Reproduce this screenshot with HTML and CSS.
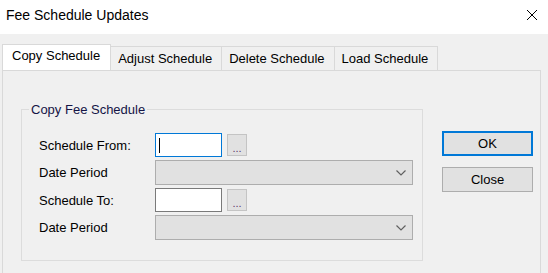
FILE: index.html
```html
<!DOCTYPE html>
<html lang="en">
<head>
  <meta charset="UTF-8">
  <title>Fee Schedule Updates</title>
  <link rel="stylesheet" href="styles.css">
</head>
<body>
<div class="titlebar">
  <span class="title">Fee Schedule Updates</span>
  <svg class="close-x" width="12" height="12" viewBox="0 0 12 12">
    <path d="M1 1 L11 11 M11 1 L1 11" stroke="#000" stroke-width="1" fill="none"/>
  </svg>
</div>

<div class="dialog">
  <div class="tabs">
    <div class="tab active">Copy Schedule</div>
    <div class="tab">Adjust Schedule</div>
    <div class="tab">Delete Schedule</div>
    <div class="tab">Load Schedule</div>
  </div>

  <div class="panel">
    <fieldset class="group">
      <legend>Copy Fee Schedule</legend>
      <div class="form-grid">
        <label>Schedule From:</label>
        <div class="field-row">
          <div class="text-box focused"><span class="caret"></span></div>
          <button class="dots-btn">...</button>
        </div>

        <label>Date Period</label>
        <div class="combo">
          <svg width="10" height="6" viewBox="0 0 10 6"><path d="M0.5 0.5 L5 5 L9.5 0.5" stroke="#606060" stroke-width="1.2" fill="none"/></svg>
        </div>

        <label>Schedule To:</label>
        <div class="field-row">
          <div class="text-box"></div>
          <button class="dots-btn">...</button>
        </div>

        <label>Date Period</label>
        <div class="combo">
          <svg width="10" height="6" viewBox="0 0 10 6"><path d="M0.5 0.5 L5 5 L9.5 0.5" stroke="#606060" stroke-width="1.2" fill="none"/></svg>
        </div>
      </div>
    </fieldset>

    <div class="actions">
      <button class="btn default">OK</button>
      <button class="btn">Close</button>
    </div>
  </div>
</div>
</body>
</html>
```

FILE: styles.css
```css
body {
  margin: 0;
  padding: 0;
  font-family: 'Liberation Sans', Arial, sans-serif;
  font-size: 13px;
  color: #000;
  background-color: #f0f0f0;
  height: 273px;
  overflow: hidden;
}

.titlebar {
  height: 34px;
  background-color: #ffffff;
  display: flex;
  justify-content: space-between;
  align-items: flex-start;
  padding: 0 10px 0 6px;
}

.title {
  font-size: 14px;
  line-height: 16px;
  padding-top: 7px;
}

.close-x {
  margin-top: 9px;
}

.dialog {
  padding: 10px 0 0 2px;
}

.tabs {
  display: flex;
  align-items: flex-end;
  height: 26px;
}

.tab {
  height: 24px;
  line-height: 24px;
  padding: 0 9px 0 7px;
  border: 1px solid #d9d9d9;
  border-bottom: none;
  border-left: none;
  box-sizing: border-box;
  background-color: #f0f0f0;
  white-space: nowrap;
}

.tab.active {
  height: 26px;
  line-height: 22px;
  padding: 0 10px 0 9px;
  border-left: 1px solid #d9d9d9;
  background-color: #ffffff;
}

.panel {
  width: 539px;
  height: 210px;
  box-sizing: border-box;
  border: 1px solid #d9d9d9;
  display: flex;
  align-items: flex-start;
  padding: 31px 0 0 18px;
}

.group {
  margin: 0;
  padding: 0 0 20px 0;
  width: 402px;
  box-sizing: border-box;
  border: 1px solid #dcdcdc;
}

.group legend {
  margin-left: 7px;
  padding: 0 2px;
  line-height: 15px;
  color: #141446;
}

.form-grid {
  display: grid;
  grid-template-columns: 116px 258px;
  row-gap: 3px;
  padding: 16px 0 0 17px;
}

.form-grid label {
  align-self: center;
}

.field-row {
  display: flex;
  align-items: center;
  gap: 5px;
  height: 24px;
}

.text-box {
  width: 67px;
  height: 24px;
  box-sizing: border-box;
  background: #ffffff;
  border: 1px solid #7a7a7a;
  padding: 4px 0 0 3px;
}

.text-box.focused {
  border-color: #0078d7;
}

.caret {
  display: block;
  width: 1px;
  height: 15px;
  background: #000;
}

.dots-btn {
  width: 20px;
  height: 22px;
  padding: 0;
  margin: 0;
  border: 1px solid #c4c4c4;
  background: #e1e1e1;
  font-family: 'Liberation Sans', Arial, sans-serif;
  font-size: 11px;
  line-height: 26px;
  color: #5a3a6a;
}

.combo {
  height: 25px;
  box-sizing: border-box;
  border: 1px solid #adadad;
  background: #e1e1e1;
  display: flex;
  justify-content: flex-end;
  align-items: center;
  padding-right: 6px;
}

.actions {
  display: flex;
  flex-direction: column;
  gap: 11px;
  margin: 29px 0 0 19px;
}

.btn {
  width: 91px;
  height: 25px;
  margin: 0;
  padding: 0;
  border: 1px solid #adadad;
  background: #e1e1e1;
  font-family: 'Liberation Sans', Arial, sans-serif;
  font-size: 13px;
  color: #000;
}

.btn.default {
  border-color: #0078d7;
  box-shadow: inset 0 0 0 1px #0078d7;
}
```
